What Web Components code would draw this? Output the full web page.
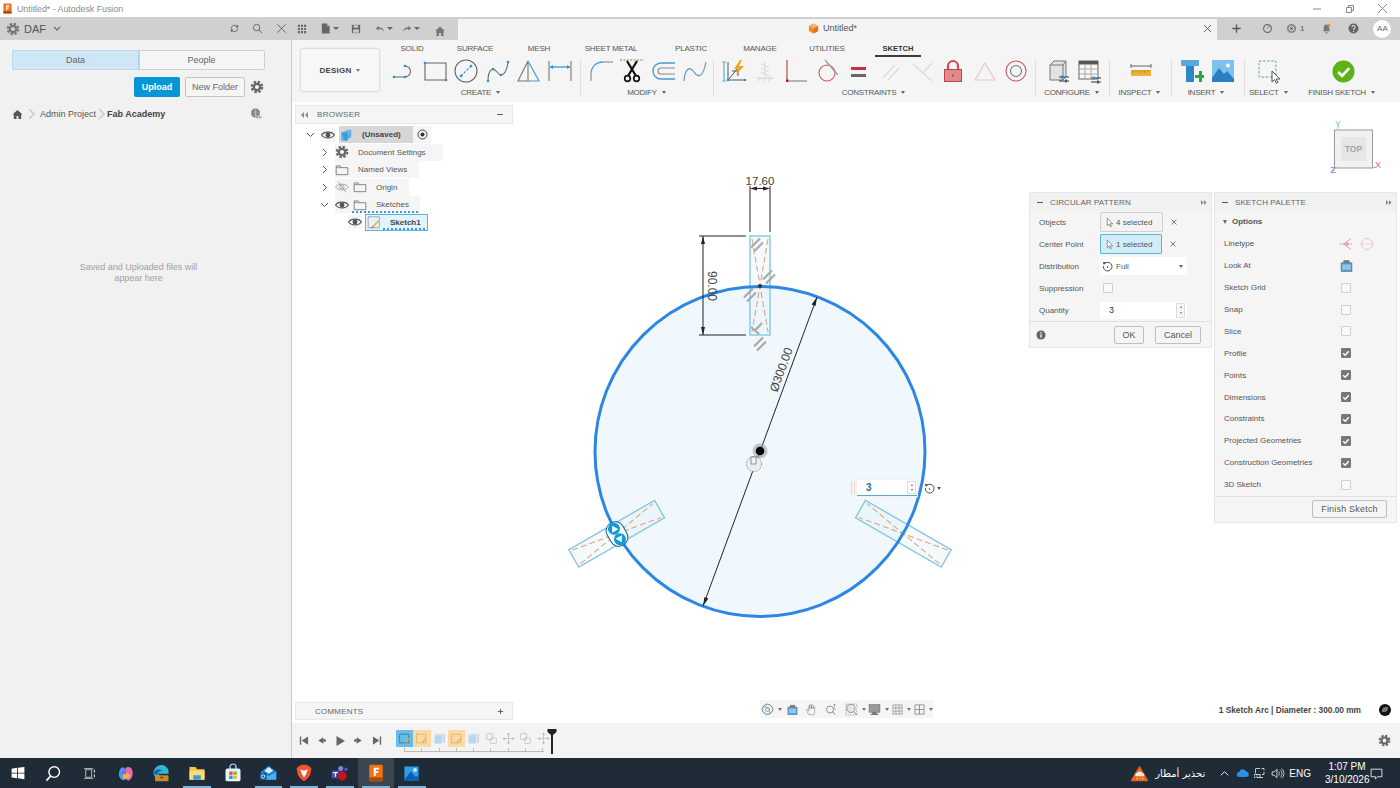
<!DOCTYPE html>
<html lang="en">
<head>
<meta charset="utf-8">
<title>Untitled* - Autodesk Fusion</title>
<style>
  html, body { margin: 0; padding: 0; }
  body {
    width: 1400px; height: 788px; overflow: hidden; background: #fff;
    display: flex; flex-direction: column;
    font-family: "Liberation Sans", Arial, sans-serif; font-size: 8px; color: #555;
  }
</style>
</head>
<body>
<title-bar></title-bar>
<tab-bar></tab-bar>
<main-area>
  <side-panel></side-panel>
  <work-area>
    <tool-ribbon>
      <tool-group label="CREATE" w="188" n="6">
        <ui-icon name="line"></ui-icon><ui-icon name="rect"></ui-icon><ui-icon name="circle"></ui-icon>
        <ui-icon name="spline"></ui-icon><ui-icon name="mirror"></ui-icon><ui-icon name="dim"></ui-icon>
      </tool-group>
      <tool-sep style="margin:3px 4px 0 4px"></tool-sep>
      <tool-group label="MODIFY" w="126" n="4">
        <ui-icon name="fillet"></ui-icon><ui-icon name="scissors"></ui-icon><ui-icon name="offset"></ui-icon><ui-icon name="spline2"></ui-icon>
      </tool-group>
      <tool-sep style="margin:3px 4px 0 2px"></tool-sep>
      <tool-group label="CONSTRAINTS" w="314" n="10">
        <ui-icon name="auto"></ui-icon><ui-icon name="fix"></ui-icon><ui-icon name="perp"></ui-icon><ui-icon name="tangent"></ui-icon><ui-icon name="equal"></ui-icon>
        <ui-icon name="parallel"></ui-icon><ui-icon name="perp2"></ui-icon><ui-icon name="lock"></ui-icon><ui-icon name="tri"></ui-icon><ui-icon name="concentric"></ui-icon>
      </tool-group>
      <tool-sep style="margin:3px 5px 0 3px"></tool-sep>
      <tool-group label="CONFIGURE" w="64" n="2">
        <ui-icon name="config1"></ui-icon><ui-icon name="config2"></ui-icon>
      </tool-group>
      <tool-sep style="margin:3px 3px 0 4px"></tool-sep>
      <tool-group label="INSPECT" w="56" n="1"><ui-icon name="ruler"></ui-icon></tool-group>
      <tool-sep style="margin:3px 4px 0 2px"></tool-sep>
      <tool-group label="INSERT" w="63" n="2"><ui-icon name="bolt"></ui-icon><ui-icon name="image"></ui-icon></tool-group>
      <tool-sep style="margin:3px 4px 0 5px"></tool-sep>
      <tool-group label="SELECT" w="41" n="1"><ui-icon name="select"></ui-icon></tool-group>
      <tool-group label="FINISH SKETCH" w="86" n="1" style="margin-left:10px"><ui-icon name="finish" size="23"></ui-icon></tool-group>
    </tool-ribbon>
    <sketch-view>
      <sketch-canvas></sketch-canvas>
      <browser-panel>
        <tree-row pad="9" chev="down" eye="on" icon="cube" label="(Unsaved)" w="74" bold shade radio></tree-row>
        <tree-row pad="23" chev="right" icon="gear" label="Document Settings" w="108"></tree-row>
        <tree-row pad="23" chev="right" icon="folder" label="Named Views" w="84"></tree-row>
        <tree-row pad="23" chev="right" inner-eye="off" icon="folder" label="Origin" w="74"></tree-row>
        <tree-row pad="23" chev="down" inner-eye="on" icon="folder" label="Sketches" w="85" wavy></tree-row>
        <tree-row pad="36" eye="on" icon="sketch" label="Sketch1" w="63" bold selected wavy></tree-row>
      </browser-panel>
      <comments-bar></comments-bar>
      <view-cube></view-cube>
      <command-dialog heading="CIRCULAR PATTERN" style="left:738px;top:91px">
        <dialog-row label="Objects"><select-chip text="4 selected"></select-chip></dialog-row>
        <dialog-row label="Center Point"><select-chip text="1 selected" active></select-chip></dialog-row>
        <dialog-row label="Distribution"><drop-select text="Full"></drop-select></dialog-row>
        <dialog-row label="Suppression"><check-box style="margin-left:3px"></check-box></dialog-row>
        <dialog-row label="Quantity"><number-field value="3"></number-field></dialog-row>
        <dialog-footer slot="footer"></dialog-footer>
      </command-dialog>
      <command-dialog heading="SKETCH PALETTE" style="left:923px;top:91px">
        <palette-row label="Options" head></palette-row>
        <palette-row label="Linetype"><ui-icon name="linetype1" size="14"></ui-icon><ui-icon name="linetype2" size="14" style="margin:0 -21px 0 7px"></ui-icon></palette-row>
        <palette-row label="Look At"><ui-icon name="lookat" size="13"></ui-icon></palette-row>
        <palette-row label="Sketch Grid"><check-box></check-box></palette-row>
        <palette-row label="Snap"><check-box></check-box></palette-row>
        <palette-row label="Slice"><check-box></check-box></palette-row>
        <palette-row label="Profile"><check-box checked></check-box></palette-row>
        <palette-row label="Points"><check-box checked></check-box></palette-row>
        <palette-row label="Dimensions"><check-box checked></check-box></palette-row>
        <palette-row label="Constraints"><check-box checked></check-box></palette-row>
        <palette-row label="Projected Geometries"><check-box checked></check-box></palette-row>
        <palette-row label="Construction Geometries"><check-box checked></check-box></palette-row>
        <palette-row label="3D Sketch"><check-box></check-box></palette-row>
        <palette-footer slot="footer"></palette-footer>
      </command-dialog>
      <value-input></value-input>
      <nav-bar></nav-bar>
      <status-text></status-text>
    </sketch-view>
    <timeline-bar></timeline-bar>
  </work-area>
</main-area>
<win-taskbar></win-taskbar>

<script>
const gearIcon = c => `<circle cx="12" cy="12" r="5.5" fill="none" stroke="${c}" stroke-width="4"/><circle cx="12" cy="12" r="9" fill="none" stroke="${c}" stroke-width="3.6" stroke-dasharray="4.2 2.87"/>`;
const dot = (x, y, r = 1.3) => `<circle cx="${x}" cy="${y}" r="${r}" fill="#2b8fd0"/>`;
const ICONS = {
  line: `<path d="M2 18H13a5.5 5.5 0 0 0 0-11" fill="none" stroke="#666" stroke-width="1.1"/>${dot(2, 18)}${dot(13, 18)}${dot(13, 7)}`,
  rect: `<path d="M2 4h21v17H2z" fill="none" stroke="#666" stroke-width="1.1"/>${dot(2, 4)}${dot(23, 21)}`,
  circle: `<circle cx="12" cy="12" r="11" fill="none" stroke="#666" stroke-width="1.1"/><path d="M7 17L17 7" stroke="#2b8fd0" stroke-width="1.2" stroke-dasharray="2.5 1.5"/>${dot(7, 17)}${dot(17, 7)}`,
  spline: `<path d="M2 22C2 10 7 8 11 13S20 17 22 3" fill="none" stroke="#666" stroke-width="1.1"/>${dot(2, 22)}${dot(7, 10)}${dot(15, 16)}${dot(22, 3)}`,
  mirror: `<path d="M11 2L1 22H11z" fill="none" stroke="#777" stroke-width="1.1"/><path d="M11 2L22 22H11" fill="none" stroke="#4a9bd0" stroke-width="1.2"/>`,
  dim: `<path d="M1 2V22M23 2V22" stroke="#777" stroke-width="1.1"/><path d="M2 8H22" stroke="#2b8fd0" stroke-width="1.2"/><path d="M2 8l3-2v4zM22 8l-3-2v4z" fill="#2b8fd0"/>`,
  fillet: `<path d="M2 22V15" stroke="#888" stroke-width="1.1"/><path d="M2 15C2 8 7 3 14 3" fill="none" stroke="#4a9bd0" stroke-width="1.3"/><path d="M14 3H24" stroke="#888" stroke-width="1.1"/>`,
  scissors: `<path d="M0 1H24" stroke="#777" stroke-width="1" stroke-dasharray="2 1.4"/><path d="M7 2L16 17M17 2L8 17" stroke="#111" stroke-width="2.2"/><circle cx="7.5" cy="19.5" r="2.8" fill="none" stroke="#111" stroke-width="1.7"/><circle cx="16.5" cy="19.5" r="2.8" fill="none" stroke="#111" stroke-width="1.7"/>`,
  offset: `<path d="M23 4H9a8 8 0 0 0 0 16H23" fill="none" stroke="#4a9bd0" stroke-width="1.4"/><path d="M23 9H9a3 3 0 0 0 0 6H23" fill="none" stroke="#888" stroke-width="1.1"/>`,
  spline2: `<path d="M1 22C2 9 7 7 11 13S20 19 23 3" fill="none" stroke="#6a9fc4" stroke-width="1.3"/>`,
  auto: `<path d="M2 3V22" stroke="#67b4e4" stroke-width="1.3"/><path d="M0 3h4M0 22h4" stroke="#67b4e4"/><path d="M6 3V21H23M6 21L16 9" fill="none" stroke="#555" stroke-width="1"/><path d="M10 12h6v5" fill="none" stroke="#555"/><path d="M18 1L12 10h4l-2 6 8-9h-5l3-6z" fill="#f3a41c"/>${dot(6, 21)}${dot(23, 21)}`,
  fix: `<path d="M12 3V18M8 5l8 4M8 9l8 4M8 13l8 4" stroke="#d8d8d8" stroke-width="1.1"/><path d="M3 19H21M5 22l3-3M10 22l3-3M15 22l3-3" stroke="#d0d0d0" stroke-width="1"/>`,
  perp: `<path d="M3 1V22" stroke="#c04a4e" stroke-width="1.2"/><path d="M3 22H23" stroke="#888" stroke-width="1.2"/><rect x="2" y="20.5" width="2.4" height="2.4" fill="#a01d22"/>`,
  tangent: `<circle cx="11" cy="14" r="8" fill="none" stroke="#cb5a5d" stroke-width="1.1"/><path d="M9 1L22 16" stroke="#999" stroke-width="1.2"/>`,
  equal: `<rect x="4" y="8" width="15" height="3" fill="#c3343a"/><rect x="4" y="15" width="15" height="3" fill="#666"/>`,
  parallel: `<path d="M4 19L16 6M9 21L20 9" stroke="#dcdcdc" stroke-width="1.3"/>`,
  perp2: `<path d="M3 5L13 14M13 14L22 4M13 14L22 22" stroke="#dcdcdc" stroke-width="1.3"/>`,
  lock: `<path d="M7 11V7a5 5 0 0 1 10 0v4" fill="none" stroke="#cb4e52" stroke-width="2.2"/><rect x="3.5" y="10.5" width="17" height="12" fill="#e58a8c" stroke="#c24348"/><rect x="11.5" y="15" width="1" height="3" fill="#a83338"/>`,
  tri: `<path d="M12 4L22 21H2z" fill="none" stroke="#ecc6c7" stroke-width="1.2"/>`,
  concentric: `<circle cx="12" cy="12" r="10" fill="none" stroke="#cb5a5d" stroke-width="1.1"/><circle cx="12" cy="12" r="5.5" fill="none" stroke="#777" stroke-width="1.1"/>`,
  config1: `<path d="M5 6L9 2H21V18L18 21H5z" fill="#e2e2e2" stroke="#777"/><path d="M5 6H18V21M18 6L21 2" fill="none" stroke="#777"/><path d="M14 18H24M14 22H24" stroke="#333" stroke-width="1"/><rect x="16" y="16.5" width="2" height="3" fill="#2b8fd0"/><rect x="20" y="20.5" width="2" height="3" fill="#555"/>`,
  config2: `<rect x="2" y="2" width="19" height="18" fill="#f7f7f7" stroke="#666"/><rect x="2" y="2" width="19" height="3.5" fill="#555"/><path d="M2 10H21M2 15H21M8 6V20M14 6V20" stroke="#999" stroke-width=".8"/><path d="M14 19H24M14 23H24" stroke="#333" stroke-width="1"/><rect x="16" y="17.5" width="2" height="3" fill="#2b8fd0"/><rect x="20" y="21.5" width="2" height="3" fill="#555"/>`,
  ruler: `<path d="M2 7H22M2 5V9M22 5V9" stroke="#555" stroke-width=".9"/><rect x="2" y="11" width="20" height="6" fill="#f2b133"/><path d="M4 11v3M7 11v2M10 11v3M13 11v2M16 11v3M19 11v2" stroke="#a87516" stroke-width=".8"/>`,
  bolt: `<rect x="1" y="1" width="18" height="6" rx="1" fill="#5aa7da"/><rect x="6" y="7" width="8" height="16" fill="#2f86c6"/><path d="M15 16h4v-4h3v4h2v3h-2v4h-3v-4h-4z" fill="#29a744"/>`,
  image: `<rect x="1" y="1" width="22" height="22" fill="#7cc2ec"/><circle cx="17" cy="6.5" r="2" fill="#fff"/><path d="M1 19L8 9l5 6 3-3 7 8v3H1z" fill="#2a7fc0"/>`,
  select: `<rect x="1" y="2" width="17" height="16" fill="none" stroke="#5caf6b" stroke-width="1" stroke-dasharray="2.5 1.6"/><path d="M14 12V23l2.5-2.4 1.8 3.6 1.6-.8-1.8-3.4H22z" fill="#fff" stroke="#444" stroke-width=".9"/>`,
  finish: `<circle cx="12" cy="12" r="11.5" fill="#5bb318"/><path d="M6.5 12.5l4 4 7.5-8" fill="none" stroke="#fff" stroke-width="2.8"/>`,
  eye: `<path d="M1 12C5 5.5 19 5.5 23 12C19 18.5 5 18.5 1 12z" fill="none" stroke="#555" stroke-width="2"/><circle cx="12" cy="12" r="4.2" fill="#555"/>`,
  eyeoff: `<path d="M1 12C5 5.5 19 5.5 23 12C19 18.5 5 18.5 1 12z" fill="none" stroke="#999" stroke-width="1.4"/><circle cx="12" cy="12" r="3.6" fill="none" stroke="#999" stroke-width="1.4"/><path d="M5 3L19 21" stroke="#999" stroke-width="1.4"/>`,
  folder: `<path d="M2 5H9l2 3H22V20H2z" fill="none" stroke="#777" stroke-width="1.5"/><path d="M2 8H11" stroke="#777" stroke-width="1.3"/>`,
  gear: gearIcon('#666'),
  gearlt: gearIcon('#777'),
  cube: `<path d="M4 8L15 3H21V16L10 22H4z" fill="#5eb0e6"/><path d="M4 8H15V22H10" fill="#3e9ad8"/><path d="M15 8V3" stroke="#9bd0f2"/>`,
  sketch: `<rect x="2" y="3" width="19" height="19" fill="none" stroke="#777" stroke-width="1.3" stroke-dasharray="3 1"/><path d="M10 20L20 10" stroke="#f0a13a" stroke-width="2.4"/><path d="M8 22l2-2" stroke="#d33" stroke-width="2.4"/>`,
  home: `<path d="M12 2L1 12h3v10h6v-7h4v7h6V12h3z" fill="#555"/>`,
  homelt: `<path d="M12 3L2 12h3v10h5v-6h4v6h5V12h3z" fill="#777"/>`,
  globe: `<circle cx="11" cy="10" r="9" fill="#777"/><path d="M2 10H20M11 1V19M5 4C8 7 14 7 17 4M5 16C8 13 14 13 17 16" stroke="#eee" stroke-width=".9" fill="none"/><path d="M11 18c3-4 9-4 12 0c-3 4-9 4-12 0z" fill="#888" stroke="#f1f1f1"/><circle cx="17" cy="18" r="1.6" fill="#fff"/>`,
  refresh: `<path d="M5 12a7 7 0 0 1 12-5l2 2M19 12a7 7 0 0 1-12 5l-2-2" fill="none" stroke="#555" stroke-width="1.8"/><path d="M20 4v6h-6zM4 20v-6h6z" fill="#555"/>`,
  search: `<circle cx="10" cy="10" r="7" fill="none" stroke="#555" stroke-width="1.8"/><path d="M15 15l7 7" stroke="#555" stroke-width="2"/>`,
  close: `<path d="M3 3L21 21M21 3L3 21" stroke="#555" stroke-width="1.8"/>`,
  grid: `<path d="M2 2h5v5H2zM9.5 2h5v5h-5zM17 2h5v5h-5zM2 9.5h5v5H2zM9.5 9.5h5v5h-5zM17 9.5h5v5h-5zM2 17h5v5H2zM9.5 17h5v5h-5zM17 17h5v5h-5z" fill="#666"/>`,
  file: `<path d="M4 1H15L21 7V23H4z" fill="#666"/><path d="M15 1V7H21" fill="#aaa"/>`,
  save: `<path d="M2 2H22V22H2z" fill="#666"/><rect x="6" y="3" width="11" height="6" fill="#ccc"/><rect x="5" y="13" width="14" height="8" fill="#ccc"/>`,
  undo: `<path d="M2 10L9 4V8C16 8 20 11 22 18C18 13 14 12 9 12V16z" fill="#777"/>`,
  redo: `<path d="M22 10L15 4V8C8 8 4 11 2 18C6 13 10 12 15 12V16z" fill="#777"/>`,
  docbox: `<path d="M12 1L22 6.5V17.5L12 23L2 17.5V6.5z" fill="#f08a24"/><path d="M12 12L22 6.5V17.5L12 23z" fill="#e26f12"/><path d="M12 1L22 6.5L12 12L2 6.5z" fill="#f7b469"/>`,
  plus: `<path d="M12 3V21M3 12H21" stroke="#555" stroke-width="3"/>`,
  clock: `<circle cx="12" cy="12" r="8.5" fill="none" stroke="#666" stroke-width="2.4"/><path d="M12 12L16 7" stroke="#666" stroke-width="2"/>`,
  jobs: `<circle cx="12" cy="12" r="10" fill="#888"/><circle cx="12" cy="12" r="5" fill="none" stroke="#ddd" stroke-width="2"/>`,
  bell: `<path d="M12 3c-4 0-6 3-6 7v5l-2 3H20l-2-3V10c0-4-2-7-6-7z" fill="#777"/><circle cx="12" cy="21" r="2" fill="#777"/><circle cx="17" cy="5" r="3.4" fill="#f08a24"/>`,
  help: `<circle cx="12" cy="12" r="11" fill="#666"/><path d="M8.5 9a3.5 3.5 0 1 1 5.5 3c-1.3.9-2 1.5-2 3" fill="none" stroke="#ddd" stroke-width="2.2"/><circle cx="12" cy="18.5" r="1.4" fill="#ddd"/>`,
  cursor: `<path d="M7 2V19l4-3.5 2.8 6 2.4-1.2-2.8-5.6H19z" fill="#fff" stroke="#666" stroke-width="1.4"/>`,
  rotate: `<path d="M7 4.5A9.5 9.5 0 1 1 3 11" fill="none" stroke="#333" stroke-width="1.8"/><path d="M2 2L9 3 4 8z" fill="#333"/><circle cx="12" cy="13" r="1.7" fill="#333"/>`,
  linetype1: `<path d="M1 12H23" stroke="#d6605f" stroke-width="1" stroke-dasharray="3 1.5"/><path d="M20 3L8 12L20 21" fill="none" stroke="#d6605f" stroke-width="1.1"/><circle cx="14" cy="12" r="2" fill="none" stroke="#d6605f"/>`,
  linetype2: `<circle cx="12" cy="12" r="9.5" fill="none" stroke="#eaa9a8" stroke-width="1.1"/><path d="M1 12H23" stroke="#eaa9a8" stroke-dasharray="3 1.5"/>`,
  lookat: `<path d="M2 7H22V23H2z" fill="#4f9fd6" stroke="#555"/><path d="M7 7V3h10v4" fill="#777" stroke="#555"/><rect x="4" y="10" width="16" height="10" fill="#8cc6ec"/>`,
  info: `<circle cx="12" cy="12" r="11" fill="#666"/><rect x="10.4" y="10" width="3.2" height="8.5" fill="#eee"/><circle cx="12" cy="6.8" r="1.9" fill="#eee"/>`,
  first: `<path d="M4 3H7V21H4zM22 3V21L8 12z" fill="#666"/>`,
  prev: `<path d="M16 5V19L5 12z" fill="#666"/><rect x="16" y="9" width="5" height="6" fill="#666"/>`,
  play: `<path d="M5 2V22L22 12z" fill="#666"/>`,
  next: `<path d="M8 5V19L19 12z" fill="#666"/><rect x="3" y="9" width="5" height="6" fill="#666"/>`,
  last: `<path d="M20 3H17V21H20zM2 3V21L16 12z" fill="#666"/>`,
  tlsketch: `<rect x="3" y="4" width="17" height="16" fill="none" stroke="#25577f" stroke-width="1.4" stroke-dasharray="3 1"/><path d="M13 20L21 12" stroke="#f0a13a" stroke-width="2.6"/>`,
  tlsketch2: `<rect x="3" y="4" width="17" height="16" fill="none" stroke="#d49a3f" stroke-width="1.3" stroke-dasharray="3 1"/><path d="M13 19L20 12" stroke="#e7a94a" stroke-width="2"/>`,
  tlbody: `<path d="M3 6L7 3H20V18L17 21H3z" fill="#cfe4f3"/><path d="M3 6H16V21H3z" fill="#b8d8ee"/><path d="M21 3V20" stroke="#aaa"/>`,
  tlcopy: `<rect x="3" y="3" width="11" height="11" rx="1" fill="none" stroke="#bbb" stroke-width="1.3"/><rect x="10" y="11" width="11" height="10" rx="1" fill="none" stroke="#bbb" stroke-width="1.3"/>`,
  tlmove: `<path d="M12 2V22M2 12H22" stroke="#bbb" stroke-width="1.4"/><path d="M12 1l-3 4h6zM12 23l-3-4h6zM1 12l4-3v6zM23 12l-4-3v6z" fill="#bbb"/>`,
  orbit: `<path d="M12 2C17 2 22 8 22 12S17 21 12 21 2 16 2 12 7 2 12 2z" fill="none" stroke="#666" stroke-width="1.6"/><path d="M5 8C10 4 18 13 16 19" fill="none" stroke="#5d9fd0" stroke-width="1.6"/><rect x="9" y="9" width="6" height="6" fill="none" stroke="#5d9fd0" stroke-width="1.4"/>`,
  hand: `<path d="M7 21C4 17 3 14 3 13c0-2 2-2 3 0l1 2V6c0-2 2-2 2 0v5V4c0-2 3-2 3 0v7V5c0-2 3-2 3 0v6V8c0-2 3-2 3 0v8c0 3-1 5-2 6z" fill="none" stroke="#888" stroke-width="1.2"/>`,
  zoom: `<circle cx="10" cy="13" r="7" fill="none" stroke="#777" stroke-width="1.5"/><path d="M15 18l6 5" stroke="#777" stroke-width="1.8"/><path d="M19 2V9M16 4h6M16 12h6" stroke="#777" stroke-width="1"/>`,
  fit: `<rect x="2" y="2" width="20" height="20" fill="none" stroke="#777" stroke-width="1" stroke-dasharray="3 1.5"/><circle cx="11" cy="10" r="7.5" fill="#e5e5e5" stroke="#777" stroke-width="1.3"/><path d="M16 16l6 6" stroke="#777" stroke-width="1.6"/>`,
  display: `<rect x="2" y="3" width="20" height="14" fill="#999" stroke="#666"/><rect x="8" y="17" width="8" height="3" fill="#666"/><rect x="5" y="20" width="14" height="2" fill="#666"/>`,
  gridnav: `<path d="M2 2h20v20H2zM2 8.5h20M2 15.5h20M8.5 2v20M15.5 2v20" fill="none" stroke="#666" stroke-width="1.1"/>`,
  panes: `<path d="M2 2h20v20H2zM2 12h20M12 2v20" fill="none" stroke="#666" stroke-width="1.4"/>`,
  winlogo: `<path d="M1 4.5L10.5 3.2V11.4H1zM12 3L23 1.5V11.4H12zM1 12.8H10.5V21L1 19.7zM12 12.8H23V22.7L12 21.2z" fill="#fff"/>`,
  tsearch: `<circle cx="13" cy="10" r="7.5" fill="none" stroke="#fff" stroke-width="2"/><path d="M8 15.5L2 22" stroke="#fff" stroke-width="2.4"/>`,
  taskview: `<path d="M5 5H16V19H5z" fill="none" stroke="#c9ced3" stroke-width="1.6"/><path d="M2 3H19M2 21H19" stroke="#c9ced3" stroke-width="1.6"/><path d="M21 5v5M21 14v5" stroke="#c9ced3" stroke-width="2.2"/>`,
  copilot: `<path d="M4 7C6 2 11 2 12 7L14 16C15 21 9 23 6 20C2 17 2 12 4 7z" fill="#4a9bf0"/><path d="M12 5C15 1 21 3 22 9C23 15 20 21 16 22C13 22 13 17 12 12z" fill="#e66bb5"/><path d="M8 14C11 10 17 11 19 15C17 20 11 21 8 18z" fill="#f2b13a"/><path d="M6 9c2-3 5-3 6-1l1 5c-3-1-5 1-7 2z" fill="#7a6cf0"/>`,
  edge: `<path d="M2 11C3 4 10 0 16 2C21 4 23 9 22 13H9C9 16 12 18 16 17C12 22 2 20 2 11z" fill="#33b7d6"/><path d="M2 11C5 6 11 6 14 9C10 9 8 11 8 14C5 15 3 14 2 11z" fill="#1464a8"/><rect x="4" y="15" width="18" height="8" rx="1" fill="#c98a2d"/><rect x="11" y="17" width="4" height="2" fill="#6c4a15"/>`,
  explorer: `<path d="M2 4H10L12 7H22V21H2z" fill="#f5c84a"/><rect x="2" y="9" width="20" height="12" fill="#f8dc7a"/><rect x="7" y="15" width="10" height="6" fill="#3a9bdc"/>`,
  store: `<path d="M8 7V4a4 4 0 0 1 8 0v3" fill="none" stroke="#bfe4f5" stroke-width="1.6"/><rect x="2" y="6" width="20" height="17" rx="2.5" fill="#e8f4fa"/><rect x="7" y="10" width="4.5" height="4.5" fill="#e8562e"/><rect x="12.5" y="10" width="4.5" height="4.5" fill="#74b82e"/><rect x="7" y="15.5" width="4.5" height="4.5" fill="#2b96e0"/><rect x="12.5" y="15.5" width="4.5" height="4.5" fill="#f4b51e"/>`,
  outlook: `<path d="M3 10L13 2L23 10V21H3z" fill="#1a78c8"/><path d="M3 10L13 16L23 10V21H3z" fill="#46b0ee"/><path d="M7 9L13 4L19 9L13 13z" fill="#d5eefb"/><rect x="1" y="12" width="9" height="9" rx="1.5" fill="#0a5aa5"/><circle cx="5.5" cy="16.5" r="2.2" fill="none" stroke="#fff" stroke-width="1.2"/>`,
  brave: `<path d="M5 3L9 1H15L19 3L22 6L20 15L16 20L12 23L8 20L4 15L2 6z" fill="#f1532b"/><path d="M7 7L12 9L17 7L15 13L12 18L9 13z" fill="#fff"/>`,
  teams: `<circle cx="13" cy="6" r="3.4" fill="#7b83eb"/><circle cx="20" cy="7" r="2.4" fill="#5059c9"/><path d="M8 10H18V18C18 21 14 22 11 21C9 20 8 18 8 16z" fill="#7b83eb"/><rect x="1" y="9" width="10" height="10" rx="1.5" fill="#4b53bc"/><path d="M3 11.5H9M6 11.5V17" stroke="#fff" stroke-width="1.4"/><circle cx="15" cy="16" r="6.5" fill="#c4151c" stroke="#1f2b36"/>`,
  fusion: `<rect x="3" y="1" width="18" height="22" rx="2" fill="#f37114"/><rect x="3" y="18" width="18" height="5" rx="1" fill="#a64a0c"/><path d="M9 5H16V7.4H11.6V9.6H15V12H11.6V16H9z" fill="#fff"/>`,
  photos: `<path d="M3 2H21a1 1 0 0 1 1 1V21a1 1 0 0 1-1 1H3a1 1 0 0 1-1-1V3a1 1 0 0 1 1-1z" fill="#2c9fe8"/><path d="M2 20L11 9l7 8 4-3v7a1 1 0 0 1-1 1H3z" fill="#0c5fb0"/><circle cx="17" cy="7" r="2.6" fill="#cdeeff"/>`,
  weather: `<path d="M12 1L24 21a1.5 1.5 0 0 1-1.3 2H1.3A1.5 1.5 0 0 1 0 21z" fill="#e8641b"/><path d="M6 14a3 3 0 0 1 3-3 4 4 0 0 1 7 .7A2.5 2.5 0 0 1 18 16H7a2 2 0 0 1-1-2z" fill="#f6e7db"/><path d="M9 18l-1 2.5M13 18l-1 2.5M17 18l-1 2.5" stroke="#f6e7db" stroke-width="1.2"/>`,
  chevup: `<path d="M4 16L12 8L20 16" fill="none" stroke="#fff" stroke-width="2"/>`,
  cloud: `<path d="M5 20a5 5 0 0 1-.5-10A7 7 0 0 1 18 9a5.5 5.5 0 0 1 0 11z" fill="#2a8fe6"/>`,
  network: `<path d="M3 3H20V15H3z" fill="none" stroke="#fff" stroke-width="1.5" stroke-dasharray="9 3"/><path d="M12 15V21M6 21H18" stroke="#fff" stroke-width="1.5"/><rect x="1" y="15" width="5" height="6" fill="#1f2b36" stroke="#fff"/>`,
  speaker: `<path d="M2 9H6L11 4V20L6 15H2z" fill="none" stroke="#fff" stroke-width="1.4"/><path d="M14 8c2 2 2 6 0 8M17 5c4 4 4 10 0 14M20 3c5 5 5 13 0 18" fill="none" stroke="#fff" stroke-width="1.3"/>`,
  notify: `<path d="M2 4H22V18H14L10 22V18H2z" fill="none" stroke="#fff" stroke-width="1.5"/>`
};

// base for every element: open shadow root with its own markup
class Base extends HTMLElement {
  constructor() {
    super();
    this.attachShadow({ mode: 'open' });
  }
  attr(name, fallback = '') {
    return this.hasAttribute(name) ? this.getAttribute(name) : fallback;
  }
  connectedCallback() {
    this.shadowRoot.innerHTML = this.markup();
  }
}
const def = (name, markup) => customElements.define(name, class extends Base {
  markup() { return markup.call(this); }
});

def('ui-icon', function () {
  const s = this.attr('size', '24');
  return `<style>:host{display:inline-flex;width:${s}px;height:${s}px;flex:none}svg{width:100%;height:100%;display:block;overflow:visible}</style>
  <svg viewBox="0 0 24 24">${ICONS[this.attr('name')] || ''}</svg>`;
});

def('title-bar', () => `<style>
  :host{display:flex;align-items:center;height:17px;background:#fff;padding:0 0 0 2px;flex:none;color:#8a8a8a;font-size:8.8px}
  span{margin-left:4px;flex:1}
  .w{width:33px;display:flex;justify-content:center}
</style>
<ui-icon name="fusion" size="11"></ui-icon><span>Untitled* - Autodesk Fusion</span>
<div class="w"><svg width="8" height="8"><path d="M0 4H8" stroke="#888"/></svg></div>
<div class="w"><svg width="8" height="8"><path d="M.5 2.5h5v5h-5zM2.5 2.5V.5h5v5h-2" fill="none" stroke="#888"/></svg></div>
<div class="w" style="margin-right:1px"><svg width="9" height="9"><path d="M0 0L9 9M9 0L0 9" stroke="#888"/></svg></div>`);

def('tab-bar', () => `<style>
  :host{display:flex;height:23px;background:#d0d0d0;flex:none;align-items:center;font-size:9px}
  .l{width:458px;display:flex;align-items:center;height:100%;position:relative;flex:none}
  .daf{display:flex;align-items:center;padding-left:6px;color:#555;font-size:11px;width:222.5px}
  .daf b{font-weight:400;margin:0 7px 0 4px}
  .it{display:flex;align-items:center;justify-content:center;flex:none}
  .caret{width:0;height:0;border:3px solid transparent;border-top:3px solid #666;border-bottom:0;margin-left:2px}
  .tab{width:759px;height:100%;background:#f4f4f4;display:flex;align-items:center;flex:none;position:relative;margin-top:3px}
  .name{position:absolute;left:350px;display:flex;align-items:center;gap:4px;color:#555;top:4px;font-size:9px}
  .x{position:absolute;left:746px;top:6px}
  .r{flex:1;display:flex;align-items:center;height:100%}
  .av{width:18px;height:18px;border-radius:50%;background:#fff;text-align:center;line-height:18px;font-size:8px;color:#666;margin-left:14px}
</style>
<div class="l">
  <div class="daf"><ui-icon name="gearlt" size="14"></ui-icon><b>DAF</b>
    <svg width="8" height="6"><path d="M1 1l3 3 3-3" fill="none" stroke="#666" stroke-width="1.1"/></svg></div>
  <div class="it"><ui-icon name="refresh" size="11"></ui-icon></div>
  <div class="it" style="margin-left:12px"><ui-icon name="search" size="11"></ui-icon></div>
  <div class="it" style="margin-left:13px"><ui-icon name="close" size="11"></ui-icon></div>
  <div class="it" style="margin-left:10.5px"><ui-icon name="grid" size="10"></ui-icon></div>
  <div class="it" style="margin-left:12.5px"><ui-icon name="file" size="11"></ui-icon><i class="caret"></i></div>
  <div class="it" style="margin-left:12.5px"><ui-icon name="save" size="10"></ui-icon></div>
  <div class="it" style="margin-left:14px"><ui-icon name="undo" size="10"></ui-icon><i class="caret"></i></div>
  <div class="it" style="margin-left:9px"><ui-icon name="redo" size="10"></ui-icon><i class="caret"></i></div>
  <div class="it" style="margin:4px 0 0 14px"><ui-icon name="homelt" size="12"></ui-icon></div>
</div>
<div class="tab">
  <div class="name"><ui-icon name="docbox" size="11"></ui-icon><span>Untitled*</span></div>
  <svg class="x" width="7" height="7"><path d="M0 0L7 7M7 0L0 7" stroke="#666"/></svg>
</div>
<div class="r">
  <div class="it" style="margin-left:14px"><ui-icon name="plus" size="11"></ui-icon></div>
  <div class="it" style="margin-left:20px"><ui-icon name="clock" size="11"></ui-icon></div>
  <div class="it" style="margin-left:13px;color:#555"><ui-icon name="jobs" size="11"></ui-icon><span style="margin-left:3px;font-size:8px">1</span></div>
  <div class="it" style="margin-left:17px"><ui-icon name="bell" size="11"></ui-icon></div>
  <div class="it" style="margin-left:16px"><ui-icon name="help" size="11"></ui-icon></div>
  <div class="av">AA</div>
</div>`);

def('main-area', () => `<style>:host{display:flex;flex:1;min-height:0}</style><slot></slot>`);
def('work-area', () => `<style>:host{display:flex;flex-direction:column;flex:1;min-width:0}</style><slot></slot>`);

def('side-panel', () => `<style>
  :host{display:block;border-right:1px solid #c8c8c8;background:#f1f1f1;flex:none;padding:10px 0 0 12px;width:279px;font-size:9px;color:#555}
  .seg{display:flex;width:253px;height:20px;box-sizing:border-box;border:1px solid #d0d0d0;border-radius:2px;background:#f5f5f5}
  .seg div{flex:1;text-align:center;line-height:18px;color:#666}
  .seg .on{background:#cfe6f4;border-right:1px solid #a7cfe6;box-shadow:0 0 0 1px #b9dbee}
  .acts{display:flex;width:252px;justify-content:flex-end;align-items:center;margin-top:7px;gap:5px}
  .up{width:46px;height:20px;background:#0696d7;color:#fff;font-weight:700;text-align:center;line-height:20px;border-radius:2px}
  .nf{width:60px;height:20px;box-sizing:border-box;border:1px solid #c4c4c4;background:#f5f5f5;text-align:center;line-height:18px;border-radius:2px;color:#666}
  .crumb{display:flex;align-items:center;height:18px;margin-top:8px;width:254px;font-size:9px}
  .crumb svg{margin:0 2px}
  .crumb svg.a{margin:0 5px}
  .crumb b{color:#444}
  .msg{width:253px;margin-top:139px;text-align:center;color:#a0a0a0;line-height:11px}
</style>
<div class="seg"><div class="on">Data</div><div>People</div></div>
<div class="acts"><div class="up">Upload</div><div class="nf">New Folder</div><ui-icon name="gear" size="14"></ui-icon></div>
<div class="crumb">
  <ui-icon name="home" size="11"></ui-icon>
  <svg class="a" width="7" height="10"><path d="M1 0l5 5-5 5" fill="none" stroke="#ccc" stroke-width="1.6"/></svg>
  <span>Admin Project</span>
  <svg width="7" height="10"><path d="M1 0l5 5-5 5" fill="none" stroke="#ccc" stroke-width="1.6"/></svg>
  <b>Fab Academy</b>
  <ui-icon name="globe" size="12" style="margin-left:auto;margin-right:4px"></ui-icon>
</div>
<div class="msg">Saved and Uploaded files will<br>appear here</div>`);

def('tool-ribbon', () => {
  const tabs = [['SOLID', 64], ['SURFACE', 62], ['MESH', 66], ['SHEET METAL', 78], ['PLASTIC', 82], ['MANAGE', 56], ['UTILITIES', 78], ['SKETCH', 64]];
  return `<style>
  :host{display:flex;height:62px;background:#f5f5f5;flex:none;box-sizing:border-box}
  .design{width:80px;height:44px;margin:8px 0 0 8px;box-sizing:border-box;border:1px solid #ddd;border-radius:3px;box-shadow:0 0 0 1px #eee;display:flex;align-items:center;justify-content:center;font-weight:700;color:#444;font-size:8px;letter-spacing:.2px;flex:none;background:#f7f7f7}
  .design i{width:0;height:0;border:2.5px solid transparent;border-top:3px solid #777;border-bottom:0;margin-left:5px}
  .col{flex:1;display:flex;flex-direction:column}
  .tabs{display:flex;height:17px}
  .tabs div{text-align:center;color:#555;line-height:17px;letter-spacing:-.2px;font-size:8px;box-sizing:border-box;height:17px}
  .tabs u{text-decoration:none;display:inline-block;height:16px;padding:0 1px}
  .tabs .on u{border-bottom:2px solid #3c3c3c;color:#333;padding:0 8px;font-weight:700;font-size:7.5px;letter-spacing:0;box-sizing:content-box;height:15px}
  .grp{display:flex;margin-left:8px;height:45px}
</style>
<div class="design">DESIGN<i></i></div>
<div class="col">
  <div class="tabs">${tabs.map(([t, w]) => `<div style="width:${w}px" class="${t === 'SKETCH' ? 'on' : ''}"><u>${t}</u></div>`).join('')}</div>
  <div class="grp"><slot></slot></div>
</div>`;
});

def('tool-group', function () {
  const w = this.attr('w'), n = this.attr('n');
  return `<style>
  :host{display:block;width:${w}px;flex:none}
  .ic{display:grid;grid-template-columns:repeat(${n},1fr);justify-items:center;align-items:center;height:28px}
  .lb{text-align:center;color:#555;font-size:8px;letter-spacing:-.25px;line-height:16px;white-space:nowrap;padding-right:3px}
  i{display:inline-block;width:0;height:0;border:2px solid transparent;border-top:3px solid #666;border-bottom:0;margin:0 0 1px 5px}
</style><div class="ic"><slot></slot></div><div class="lb">${this.attr('label')}<i></i></div>`;
});

def('tool-sep', () => `<style>:host{display:block;width:1px;height:36px;background:#dedede;flex:none}</style>`);

def('sketch-view', () => `<style>:host{display:block;position:relative;flex:1;min-height:0;background:#fff;overflow:hidden}</style><slot></slot>`);

def('sketch-canvas', () => {
  const rectShape = `<rect x="750" y="236" width="20" height="99" fill="#dff1fa" fill-opacity=".35" stroke="#7fc4de" stroke-width="1.3"/>
    <path d="M752 239L768 332M768 239L752 332" stroke="#dfa47d" stroke-width="1.1" stroke-dasharray="6 3" fill="none"/>`;
  const mark = (x, y) => `<path d="M${x - 6} ${y + 2.5}L${x + 3} ${y - 6.5}M${x - 3} ${y + 6.5}L${x + 6} ${y - 2.5}" stroke="#aaa" stroke-width="2.2"/>`;
  return `<style>
  :host{position:absolute;inset:0;display:block}
  svg{display:block;width:100%;height:100%;font-family:"Liberation Sans",Arial,sans-serif}
</style>
<svg viewBox="292 102 1108 621">
  <circle cx="760" cy="451" r="165" fill="#f0f8fe"/>
  ${rectShape}
  <g transform="rotate(120 760 451)">${rectShape}</g>
  <g transform="rotate(240 760 451)">${rectShape}</g>
  <circle cx="760" cy="451.5" r="165" fill="none" stroke="#2b87e3" stroke-width="3"/>
  ${mark(757, 245)}${mark(769, 277)}${mark(750, 295)}${mark(760, 344)}
  <path d="M751 327L759 334M755 330.5L762 323" stroke="#aaa" stroke-width="2.2"/>
  <circle cx="760" cy="286" r="2" fill="#333"/>
  <g stroke="#222" stroke-width="1" fill="none">
    <path d="M750 186V232M770 186V232M756 188.5H764"/>
    <path d="M699 236H746M699 335H746M703 236V335"/>
    <path d="M703 606L817 297"/>
  </g>
  <g fill="#222">
    <path d="M750 188.5l7-2v4zM770 188.5l-7-2v4z"/>
    <path d="M703 236l-2 8h4zM703 335l-2-8h4z"/>
    <path d="M817 297l-1.4 9-4-1.5zM703 606l1.4-9 4 1.5z"/>
  </g>
  <text x="760" y="185" font-size="11.5" fill="#444" text-anchor="middle">17.60</text>
  <text transform="translate(708 286) rotate(90)" font-size="12" fill="#444" text-anchor="middle">90.00</text>
  <text transform="translate(785 371) rotate(-70)" font-size="12" fill="#444" text-anchor="middle">Ø300.00</text>
  <circle cx="754" cy="464" r="7.5" fill="#eee" stroke="#888" stroke-width=".8" stroke-dasharray="2 1"/>
  <rect x="751" y="457" width="5" height="7" fill="#f5f5f5" stroke="#777" stroke-width=".8"/>
  <circle cx="760" cy="451" r="7.5" fill="#999" fill-opacity=".55"/>
  <circle cx="760" cy="451" r="4.3" fill="#000"/>
  <g transform="rotate(-30 617 534)">
    <rect x="608" y="521.5" width="18" height="25" rx="8.5" fill="#fff" stroke="#0b5f95" stroke-width="1"/>
    <circle cx="617" cy="528" r="6" fill="#0e9ad7"/>
    <circle cx="617" cy="540" r="6" fill="#0e9ad7"/>
    <path d="M617 524.5l-3.6 6h7.2zM617 543.5l-3.6-6h7.2z" fill="#fff"/>
  </g>
</svg>`;
});

def('browser-panel', () => `<style>
  :host{position:absolute;left:3px;top:3px;width:218px;display:block}
  .h{height:19px;background:#f5f5f5;border:1px solid #e8e8e8;box-sizing:border-box;display:flex;align-items:center;color:#666;letter-spacing:.3px;padding-left:5px}
  .h span{margin-left:9px;flex:1}
  .m{width:6px;height:1px;background:#666;margin-right:9px}
  .t{padding-top:2px}
</style>
<div class="h"><svg width="7" height="6"><path d="M3 0L0 3l3 3zM7 0L4 3l3 3z" fill="#888"/></svg><span>BROWSER</span><div class="m"></div></div>
<div class="t"><slot></slot></div>`);

def('tree-row', function () {
  const pad = this.attr('pad', '0');
  const chev = this.attr('chev');
  const chevron = chev === 'down' ? '<path d="M1 3l3.5 3.5L8 3"/>' : chev === 'right' ? '<path d="M3 1l3.5 3.5L3 8"/>' : '';
  const eye = this.attr('eye');
  const inner = this.attr('inner-eye');
  const eyeIc = v => `<ui-icon name="${v === 'off' ? 'eyeoff' : 'eye'}" size="14"></ui-icon>`;
  const shade = this.hasAttribute('shade');
  const sel = this.hasAttribute('selected');
  return `<style>
  :host{display:flex;align-items:center;height:17.5px;padding-left:${pad}px}
  .c{width:12px;height:9px;flex:none;display:flex;justify-content:center}
  .e{margin-left:5px;display:flex;background:${eye ? '#f5f5f5' : 'transparent'}}
  .b{position:relative;margin-left:${eye ? 4 : 5}px;width:${this.attr('w')}px;height:17px;box-sizing:border-box;display:flex;align-items:center;gap:4px;flex:none;
     background:${shade ? '#d6d6d6' : sel ? '#e3f3fb' : '#f5f5f5'};${sel ? 'border:1px solid #5bb3d8;margin-left:3px;padding-left:1px;' : ''}}
  .l{margin-left:5px;color:#555;${this.hasAttribute('bold') ? 'font-weight:700;color:#444' : ''}}
  .w{position:absolute;left:17px;right:0;bottom:0;height:2px;background:repeating-linear-gradient(90deg,#3a9bd8 0 2px,transparent 2px 4px)}
  .r{width:18px;height:17px;background:#f5f5f5;display:flex;align-items:center;justify-content:center}
</style>
<span class="c">${chevron ? `<svg width="9" height="9" fill="none" stroke="#555" stroke-width="1">${chevron}</svg>` : ''}</span>
${eye ? `<span class="e">${eyeIc(eye)}</span>` : ''}
<div class="b">${inner ? eyeIc(inner) : ''}<ui-icon name="${this.attr('icon')}" size="14"></ui-icon><span class="l">${this.attr('label')}</span>${this.hasAttribute('wavy') ? '<i class="w"></i>' : ''}</div>
${this.hasAttribute('radio') ? '<div class="r"><svg width="11" height="11"><circle cx="5.5" cy="5.5" r="4.5" fill="none" stroke="#444"/><circle cx="5.5" cy="5.5" r="2" fill="#333"/></svg></div>' : ''}`;
});

def('comments-bar', () => `<style>
  :host{position:absolute;left:3px;bottom:3px;width:218px;height:18px;background:#f5f5f5;border:1px solid #e8e8e8;box-sizing:border-box;display:flex;align-items:center;color:#666;padding-left:19px;letter-spacing:.2px}
  span{flex:1}
  ui-icon{margin-right:8px}
</style><span>COMMENTS</span><ui-icon name="plus" size="7"></ui-icon>`);

def('view-cube', () => `<style>
  :host{position:absolute;left:1030px;top:17px;width:60px;height:60px;display:block}
  svg{display:block;font-family:"Liberation Sans",Arial,sans-serif}
</style>
<svg width="60" height="60" viewBox="0 0 60 60">
  <path d="M16 10V4" stroke="#a4d9a4" stroke-width="1.2"/>
  <rect x="12.5" y="11" width="38" height="38" fill="#f1f1f1" stroke="#999"/>
  <rect x="19" y="18" width="25" height="24" fill="#e6e6e6"/>
  <text x="31.5" y="33" font-size="8.5" font-weight="700" fill="#a5a5a5" text-anchor="middle">TOP</text>
  <path d="M50 48.5h4" stroke="#e89a9a"/><path d="M12 50l-1 2" stroke="#9aa0ea"/>
  <text x="16" y="8" font-size="9" fill="#8fd08f" text-anchor="middle">Y</text>
  <text x="56" y="49" font-size="9" fill="#e06a6a" text-anchor="middle">X</text>
  <text x="11" y="54" font-size="9" font-weight="700" fill="#8f94e8" text-anchor="middle">Z</text>
</svg>`);

def('command-dialog', function () {
  return `<style>
  :host{position:absolute;display:block;width:181px;background:#f5f5f5;box-shadow:0 0 0 1px #e6e6e6;color:#555}
  .h{height:18px;display:flex;align-items:center;padding:0 4px 0 7px;color:#666;background:#f1f1f1;letter-spacing:.1px;font-size:8px}
  .m{width:6px;height:1px;background:#555;margin-right:7px}
  .h span{flex:1}
  .f{border-top:1px solid #e0e0e0}
</style>
<div class="h"><div class="m"></div><span>${this.attr('heading')}</span>
<svg width="6" height="5"><path d="M0 0l2.5 2.5L0 5zM3 0l2.5 2.5L3 5z" fill="#888"/></svg></div>
<slot></slot><div class="f"><slot name="footer"></slot></div>`;
});

def('dialog-row', function () {
  return `<style>
  :host{display:flex;align-items:center;height:22px;padding-left:9px}
  .l{width:61px;flex:none}
</style><span class="l">${this.attr('label')}</span><slot></slot>`;
});

def('select-chip', function () {
  const on = this.hasAttribute('active');
  return `<style>
  :host{display:flex;align-items:center;gap:8px}
  .c{width:${on ? 62 : 63}px;height:20px;box-sizing:border-box;border:1px solid ${on ? '#5bb3d8' : '#d2d2d2'};background:${on ? '#d3edf8' : '#f3f3f3'};border-radius:1px;display:flex;align-items:center;padding-left:3px;color:#555}
  .c span{margin-left:1px}
</style><div class="c"><ui-icon name="cursor" size="11"></ui-icon><span>${this.attr('text')}</span></div>
<svg width="6" height="6"><path d="M.5 .5l5 5M5.5 .5l-5 5" stroke="#777"/></svg>`;
});

def('drop-select', function () {
  return `<style>
  :host{display:flex;align-items:center;width:87px;height:18px;background:#fff;box-sizing:border-box;padding:0 4px 0 2px;color:#555}
  span{flex:1;margin-left:3px}
  i{width:0;height:0;border:2.5px solid transparent;border-top:3px solid #666;border-bottom:0}
</style><ui-icon name="rotate" size="11"></ui-icon><span>${this.attr('text')}</span><i></i>`;
});

def('number-field', function () {
  return `<style>
  :host{display:flex;align-items:center;width:87px;height:17px;background:#fff;padding-left:9px;box-sizing:border-box;color:#333;font-size:9px}
  span{flex:1}
  .s{width:9px;height:15px;margin-right:2px;box-sizing:border-box;border:1px solid #ddd;display:flex;flex-direction:column;align-items:center;justify-content:space-around;background:#f7f7f7}
  i{width:0;height:0;border:1.5px solid transparent}
  .u{border-bottom:2px solid #666;border-top:0}.d{border-top:2px solid #666;border-bottom:0}
</style><span>${this.attr('value')}</span><div class="s"><i class="u"></i><i class="d"></i></div>`;
});

def('check-box', function () {
  const on = this.hasAttribute('checked');
  return `<style>
  :host{display:inline-flex;width:10px;height:10px;box-sizing:border-box;flex:none;border:1px solid ${on ? '#777' : '#cfcfcf'};background:${on ? '#777' : '#f9f9f9'};align-items:center;justify-content:center;border-radius:1px}
</style>${on ? '<svg width="8" height="8"><path d="M1.2 4.2l2 2 3.6-4" fill="none" stroke="#fff" stroke-width="1.4"/></svg>' : ''}`;
});

def('dialog-footer', () => `<style>
  :host{display:flex;align-items:center;height:25px;padding:0 10px 0 6px}
  .i{flex:1;display:flex}
  .b{height:18px;box-sizing:border-box;border:1px solid #bfbfbf;background:#f5f5f5;text-align:center;line-height:16px;font-size:9px;color:#555;border-radius:2px}
</style><div class="i"><ui-icon name="info" size="10"></ui-icon></div>
<div class="b" style="width:30px;margin-right:11px">OK</div><div class="b" style="width:46px">Cancel</div>`);

def('palette-footer', () => `<style>
  :host{display:flex;justify-content:flex-end;align-items:center;height:25px;padding-right:9px}
  .b{width:75px;height:18px;box-sizing:border-box;border:1px solid #bfbfbf;background:#f5f5f5;text-align:center;line-height:16px;font-size:9px;letter-spacing:.2px;color:#555;border-radius:2px}
</style><div class="b">Finish Sketch</div>`);

def('palette-row', function () {
  const head = this.hasAttribute('head');
  return `<style>
  :host{display:flex;align-items:center;height:21.9px;padding-left:${head ? 8 : 9}px;box-sizing:border-box}
  .l{flex:1;${head ? 'font-weight:700;color:#555' : ''}}
  .v{width:20px;margin-right:40px;display:flex;justify-content:center;align-items:center}
  i{width:0;height:0;border:2.5px solid transparent;border-top:4px solid #666;border-bottom:0;margin-right:5px;margin-top:1px}
</style>${head ? '<i></i>' : ''}<span class="l">${this.attr('label')}</span><div class="v"><slot></slot></div>`;
});

def('value-input', () => `<style>
  :host{position:absolute;left:559px;top:378px;display:flex;align-items:center;height:16px}
  .g{width:6px;height:14px;background:repeating-linear-gradient(90deg,#f2d9d0 0 1px,#f5f5f5 1px 3px)}
  .f{width:60px;height:16px;box-sizing:border-box;background:#fff;border-bottom:1px solid #57a7d4;box-shadow:0 0 0 1px #f1f1f1;display:flex;align-items:center;padding-left:9px;font-size:10px;font-weight:700;color:#2a6f96}
  .f span{flex:1}
  .s{width:9px;height:13px;border:1px solid #ddd;box-sizing:border-box;display:flex;flex-direction:column;align-items:center;justify-content:space-around;margin-right:1px}
  .s i{width:0;height:0;border:1.5px solid transparent}
  .s .u{border-bottom:2px solid #666;border-top:0}.s .d{border-top:2px solid #666;border-bottom:0}
  .o{display:flex;align-items:center;margin-left:7px;background:#fff;padding:1px 0}
  .c{width:0;height:0;border:2px solid transparent;border-top:3px solid #555;border-bottom:0;margin-left:2px}
</style>
<div class="g"></div>
<div class="f"><span>3</span><div class="s"><i class="u"></i><i class="d"></i></div></div>
<div class="o"><ui-icon name="rotate" size="11"></ui-icon><i class="c"></i></div>`);

def('nav-bar', () => {
  const c = '<i></i>';
  return `<style>
  :host{position:absolute;left:468px;top:598px;width:173px;height:18px;background:#f5f5f5;display:flex;align-items:center;padding-left:1px;box-sizing:border-box}
  i{width:0;height:0;border:2px solid transparent;border-top:3px solid #777;border-bottom:0;margin:0 0 0 4px}
</style>
<ui-icon name="orbit" size="13"></ui-icon>${c}
<ui-icon name="lookat" size="11" style="margin-left:5px"></ui-icon>
<ui-icon name="hand" size="13" style="margin-left:7px"></ui-icon>
<ui-icon name="zoom" size="12" style="margin-left:7px"></ui-icon>
<ui-icon name="fit" size="13" style="margin-left:8px"></ui-icon>${c}
<ui-icon name="display" size="13" style="margin-left:2px"></ui-icon>${c}
<ui-icon name="gridnav" size="11" style="margin-left:3px"></ui-icon>${c}
<ui-icon name="panes" size="11" style="margin-left:3px"></ui-icon>${c}`;
});

def('status-text', () => `<style>
  :host{position:absolute;right:39px;top:602px;display:block;font-size:8.3px;font-weight:700;color:#444;line-height:12px;white-space:nowrap}
  .d{position:absolute;left:calc(100% + 18px);top:0;width:12px;height:12px;border-radius:50%;background:#111}
  .d::after{content:"";position:absolute;left:3px;top:3px;width:6px;height:5px;border-radius:4px 0 4px 0;background:#777}
</style>1 Sketch Arc | Diameter : 300.00 mm<div class="d"></div>`);

def('timeline-bar', () => {
  const items = [['tlsketch', '#66bdea'], ['tlsketch2', '#f9d9a6'], ['tlbody', ''], ['tlsketch2', '#f9d9a6'], ['tlbody', ''], ['tlcopy', ''], ['tlmove', ''], ['tlcopy', ''], ['tlmove', '']];
  return `<style>
  :host{display:flex;align-items:center;height:35px;background:#f3f3f3;flex:none;padding-left:2px;position:relative}
  .c{width:18.5px;display:flex;justify-content:center;flex:none}
  .items{display:flex;margin-left:9.5px;position:relative;height:24px;align-items:flex-start;margin-top:2px}
  .it{width:17.3px;height:17px;display:flex;align-items:center;justify-content:center;flex:none}
  .base{position:absolute;left:8px;right:8px;top:18.5px;border-bottom:1px solid #bbb;background:repeating-linear-gradient(90deg,#bbb 0 1px,transparent 1px 17.3px);height:3px}
  .mk{margin-left:-5px;flex:none;display:flex}
  .g{margin-left:auto;margin-right:9px}
</style>
${['first', 'prev', 'play', 'next', 'last'].map(n => `<div class="c"><ui-icon name="${n}" size="${n === 'play' ? 12 : 11}"></ui-icon></div>`).join('')}
<div class="items">${items.map(([n, b]) => `<div class="it" style="${b ? 'background:' + b : ''}"><ui-icon name="${n}" size="13"></ui-icon></div>`).join('')}<div class="base"></div></div>
<div class="mk"><svg width="10" height="26" style="margin-top:2px"><path d="M.5 0H9.5V3L6 6H4L.5 3z" fill="#222"/><rect x="4" y="4" width="2" height="21" fill="#222"/></svg></div>
<ui-icon class="g" name="gear" size="13"></ui-icon>`;
});

def('win-taskbar', () => {
  const apps = [['winlogo', 14], ['tsearch', 17], ['taskview', 13], ['copilot', 17], ['edge', 18], ['explorer', 18, 1], ['store', 18], ['outlook', 18, 1], ['brave', 18, 1], ['teams', 18, 1], ['fusion', 18, 1, 1], ['photos', 17, 1]];
  return `<style>
  :host{display:flex;align-items:center;height:30px;background:#1f2b36;flex:none;color:#fff;font-size:10px}
  .a{width:35.8px;height:30px;display:flex;align-items:center;justify-content:center;position:relative;flex:none;box-sizing:border-box}
  .a.u::after{content:"";position:absolute;left:4px;right:4px;bottom:0;height:2px;background:#7fb6dc}
  .a.h{background:#3b4650}
  .tray{margin-left:auto;display:flex;align-items:center;height:100%}
  .ar{font-family:"DejaVu Sans","Noto Sans",sans-serif;font-size:10px;margin:0 14px 0 7px;color:#fff}
  .ic{margin-right:5px}
  .clock{width:44px;text-align:center;line-height:13px;font-size:10px;margin-left:14px;white-space:nowrap}
  .en{margin:0 0 0 5px;font-size:10px}
</style>
${apps.map(([n, s, u, h]) => `<div class="a${u ? ' u' : ''}${h ? ' h' : ''}"><ui-icon name="${n}" size="${s}"></ui-icon></div>`).join('')}
<div class="tray">
  <ui-icon name="weather" size="17"></ui-icon>
  <span class="ar" dir="rtl">تحذير أمطار</span>
  <ui-icon class="ic" name="chevup" size="11" style="margin-right:7px"></ui-icon>
  <ui-icon class="ic" name="cloud" size="12"></ui-icon>
  <ui-icon class="ic" name="network" size="12"></ui-icon>
  <ui-icon name="speaker" size="13"></ui-icon>
  <span class="en">ENG</span>
  <div class="clock">1:07 PM<br>3/10/2026</div>
  <ui-icon name="notify" size="13" style="margin:0 17px 0 1px"></ui-icon>
</div>`;
});
</script>
</body>
</html>
